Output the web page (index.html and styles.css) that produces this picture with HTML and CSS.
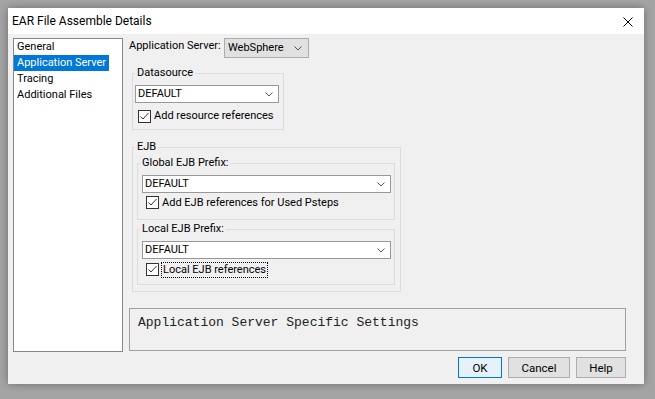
FILE: index.html
```html
<!DOCTYPE html>
<html lang="en">
<head>
  <meta charset="UTF-8">
  <title>EAR File Assemble Details</title>
  <link rel="stylesheet" href="styles.css">
</head>
<body>
  <div class="dialog">
    <div class="titlebar">
      <span class="title">EAR File Assemble Details</span>
      <svg class="close" width="10" height="10" viewBox="0 0 10 10">
        <path d="M0.5 0.5 L9.5 9.5 M9.5 0.5 L0.5 9.5" stroke="#000" stroke-width="1" fill="none"/>
      </svg>
    </div>

    <div class="main">
      <ul class="nav">
        <li><span>General</span></li>
        <li><span class="selected">Application Server</span></li>
        <li><span>Tracing</span></li>
        <li><span>Additional Files</span></li>
      </ul>

      <div class="pane">
        <div class="server-row">
          <label>Application Server:</label>
          <div class="button-combo">
            <span>WebSphere</span>
            <svg class="chevron" width="8" height="5" viewBox="0 0 8 5"><path d="M0.5 0.5 L4 4 L7.5 0.5" stroke="#555" fill="none"/></svg>
          </div>
        </div>

        <fieldset class="group datasource">
          <legend>Datasource</legend>
          <div class="combo">
            <span>DEFAULT</span>
            <svg class="chevron" width="8" height="5" viewBox="0 0 8 5"><path d="M0.5 0.5 L4 4 L7.5 0.5" stroke="#555" fill="none"/></svg>
          </div>
          <div class="check">
            <span class="box"><svg width="11" height="11" viewBox="0 0 11 11"><path d="M1.5 5.5 L4 8 L9.5 2" stroke="#333" fill="none"/></svg></span>
            <span>Add resource references</span>
          </div>
        </fieldset>

        <fieldset class="group ejb">
          <legend>EJB</legend>

          <fieldset class="group inner global">
            <legend>Global EJB Prefix:</legend>
            <div class="combo">
              <span>DEFAULT</span>
              <svg class="chevron" width="8" height="5" viewBox="0 0 8 5"><path d="M0.5 0.5 L4 4 L7.5 0.5" stroke="#555" fill="none"/></svg>
            </div>
            <div class="check">
              <span class="box"><svg width="11" height="11" viewBox="0 0 11 11"><path d="M1.5 5.5 L4 8 L9.5 2" stroke="#333" fill="none"/></svg></span>
              <span>Add EJB references for Used Psteps</span>
            </div>
          </fieldset>

          <fieldset class="group inner local">
            <legend>Local EJB Prefix:</legend>
            <div class="combo">
              <span>DEFAULT</span>
              <svg class="chevron" width="8" height="5" viewBox="0 0 8 5"><path d="M0.5 0.5 L4 4 L7.5 0.5" stroke="#555" fill="none"/></svg>
            </div>
            <div class="check">
              <span class="box"><svg width="11" height="11" viewBox="0 0 11 11"><path d="M1.5 5.5 L4 8 L9.5 2" stroke="#333" fill="none"/></svg></span>
              <span class="focused">Local EJB references</span>
            </div>
          </fieldset>
        </fieldset>

        <div class="description">Application Server Specific Settings</div>

        <div class="buttons">
          <button type="button" class="btn ok-btn">OK</button>
          <button type="button" class="btn cancel-btn">Cancel</button>
          <button type="button" class="btn help-btn">Help</button>
        </div>
      </div>
    </div>
  </div>
</body>
</html>
```

FILE: styles.css
```css
* {
  margin: 0;
  padding: 0;
  box-sizing: border-box;
}

html, body {
  height: 100%;
}

body {
  background-color: #a4a4a4;
  padding: 8px;
  font-family: 'Segoe UI', Roboto, sans-serif;
  font-size: 11px;
  color: #000;
  white-space: nowrap;
}

.dialog {
  width: 636px;
  height: 376px;
  background-color: #f0f0f0;
  box-shadow: 0 0 8px rgba(0, 0, 0, 0.35);
}

.titlebar {
  height: 26px;
  background-color: #fff;
  display: flex;
  align-items: center;
  justify-content: space-between;
  padding: 0 11px 0 4px;
}

.title {
  font-size: 12px;
  line-height: 16px;
}

.close {
  display: block;
  margin-top: 1px;
}

.main {
  display: flex;
  padding: 4px 0 0 5px;
}

.nav {
  list-style: none;
  width: 110px;
  height: 314px;
  background-color: #fff;
  border: 1px solid #828790;
}

.nav li {
  height: 16px;
  line-height: 16px;
}

.nav li span {
  display: inline-block;
  padding: 0 3px;
}

.nav li .selected {
  background-color: #0078d7;
  color: #fff;
}

.pane {
  width: 497px;
  margin-left: 6px;
  display: flex;
  flex-direction: column;
}

.server-row {
  display: flex;
  align-items: flex-start;
  height: 20px;
}

.server-row label {
  width: 95px;
  line-height: 16px;
}

.button-combo {
  width: 85px;
  height: 20px;
  background-color: #e1e1e1;
  border: 1px solid #adadad;
  display: flex;
  align-items: center;
  justify-content: space-between;
  padding: 0 6px 0 3px;
  line-height: 16px;
}

.chevron {
  display: block;
}

.group {
  border: 1px solid #dcdcdc;
  min-width: 0;
  margin-left: 3px;
  padding: 4px 4px 2px 2px;
}

.group legend {
  line-height: 16px;
  padding: 0 2px;
}

.datasource {
  width: 152px;
  margin-top: 7px;
  padding-bottom: 4px;
}

.ejb {
  width: 269px;
  margin-top: 9px;
  padding: 0 5px 6px 2px;
}

.inner {
  margin-left: 2px;
  padding: 4px 3px 8px 4px;
}

.inner legend {
  margin-left: -2px;
}

.local {
  margin-top: 1px;
  padding-bottom: 6px;
}

.combo {
  height: 18px;
  background-color: #fff;
  border: 1px solid #999;
  display: flex;
  align-items: center;
  justify-content: space-between;
  padding: 0 5px 0 2px;
  line-height: 16px;
}

.check {
  display: flex;
  align-items: center;
  height: 18px;
  margin-top: 4px;
  margin-left: 3px;
  line-height: 16px;
}

.inner .check {
  height: 17px;
  margin-top: 1px;
  margin-left: 4px;
}

.local .check {
  margin-top: 2px;
}

.box {
  width: 13px;
  height: 13px;
  border: 1px solid #333;
  background-color: #fff;
  margin-right: 3px;
  display: flex;
}

.focused {
  outline: 1px dotted #000;
  padding: 0 1px;
  line-height: 14px;
}

.description {
  height: 43px;
  margin-top: 16px;
  border: 1px solid #a0a0a0;
  padding: 6px 8px 0;
  font-family: 'Liberation Mono', 'Courier New', monospace;
  font-size: 13px;
  line-height: 16px;
  color: #222;
}

.buttons {
  display: flex;
  justify-content: flex-end;
  gap: 6px;
  margin-top: 6px;
}

.btn {
  height: 21px;
  font-family: inherit;
  font-size: 11.5px;
  background-color: #e1e1e1;
  border: 1px solid #adadad;
  color: #000;
}

.ok-btn {
  width: 44px;
  background-color: #e5f1fb;
  border-color: #0078d7;
}

.cancel-btn {
  width: 62px;
}

.help-btn {
  width: 50px;
}
```
